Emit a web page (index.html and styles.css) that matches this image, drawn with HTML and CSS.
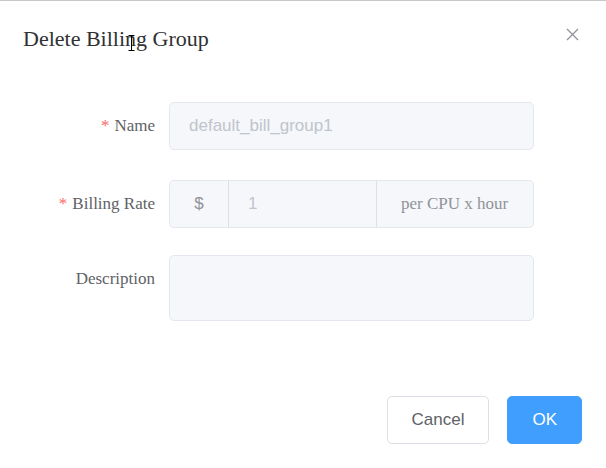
FILE: index.html
```html
<!DOCTYPE html>
<html>
<head>
<meta charset="utf-8">
<link rel="stylesheet" href="styles.css">
</head>
<body>
<div class="dialog">
  <div class="header">
    <span class="title">Delete Billing Group</span>
    <button class="close" aria-label="Close">
      <svg width="19" height="19" viewBox="0 0 19 19"><path d="M4 4 L15 15 M15 4 L4 15" stroke="#909399" stroke-width="1.3" fill="none"/></svg>
    </button>
  </div>
  <div class="body">
    <div class="row r1">
      <label class="label"><span class="req">*</span>Name</label>
      <div class="control">
        <div class="input">default_bill_group1</div>
      </div>
    </div>
    <div class="row r2">
      <label class="label"><span class="req">*</span>Billing Rate</label>
      <div class="control group">
        <div class="prepend">$</div>
        <div class="input mid">1</div>
        <div class="append">per CPU x hour</div>
      </div>
    </div>
    <div class="row r3">
      <label class="label">Description</label>
      <div class="control">
        <div class="textarea"></div>
      </div>
    </div>
  </div>
  <div class="footer">
    <button class="btn">Cancel</button>
    <button class="btn primary">OK</button>
  </div>
  <svg class="cursor" width="7" height="16" viewBox="0 0 7 16"><path d="M0.5 0.5 H6.5 M3.5 0.5 V15.5 M0.5 15.5 H6.5" stroke="#000" stroke-width="1" fill="none"/></svg>
</div>
</body>
</html>
```

FILE: styles.css
```css
html, body {
  margin: 0;
  padding: 0;
  background: #fff;
}
body {
  border-top: 1px solid #c9c9c9;
  width: 606px;
  height: 467px;
  overflow: hidden;
}
.dialog {
  position: relative;
  width: 606px;
  height: 467px;
  display: flex;
  flex-direction: column;
}
.header {
  display: flex;
  justify-content: space-between;
  align-items: flex-start;
  padding: 24px 24px 12px 23px;
}
.title {
  font-family: "Liberation Serif", serif;
  font-size: 22px;
  line-height: 28.8px;
  color: #303133;
}
.close {
  border: 0;
  background: none;
  padding: 0;
  margin: 0;
  width: 19px;
  height: 19px;
  display: block;
}
.close svg { display: block; }
.body {
  padding: 36px 24px 36px 24px;
}
.row {
  display: flex;
  align-items: flex-start;
}
.r1 { margin-bottom: 30px; }
.r2 { margin-bottom: 27px; }
.r3 { margin-bottom: 27px; }
.label {
  width: 145px;
  box-sizing: border-box;
  padding-right: 14px;
  text-align: right;
  font-family: "Liberation Serif", serif;
  font-size: 17px;
  line-height: 48px;
  color: #606266;
}
.req {
  color: #f56c6c;
  margin-right: 5px;
}
.control {
  width: 365px;
}
.input {
  box-sizing: border-box;
  height: 48px;
  line-height: 46px;
  border: 1px solid #e4e7ed;
  background: #f5f7fa;
  border-radius: 5px;
  padding: 0 18px 0 19px;
  font-family: "Liberation Sans", sans-serif;
  font-size: 17px;
  color: #c0c4cc;
}
.group {
  display: flex;
  height: 48px;
}
.prepend, .append {
  box-sizing: border-box;
  height: 48px;
  line-height: 46px;
  background: #f5f7fa;
  border: 1px solid #e4e7ed;
  color: #909399;
  padding: 0 24px;
  font-size: 17px;
}
.prepend {
  font-family: "Liberation Sans", sans-serif;
  border-radius: 5px 0 0 5px;
  border-right: 1px solid #dcdfe6;
  width: 60px;
  padding: 0;
  text-align: center;
}
.input.mid {
  flex: 1;
  border-radius: 0;
  border-left: 0;
  border-right: 0;
}
.append {
  font-family: "Liberation Serif", serif;
  border-radius: 0 5px 5px 0;
  border-left: 1px solid #dcdfe6;
  width: 158px;
}
.textarea {
  box-sizing: border-box;
  height: 66px;
  border: 1px solid #e4e7ed;
  background: #f5f7fa;
  border-radius: 5px;
}
.footer {
  display: flex;
  justify-content: flex-end;
  gap: 18px;
  padding: 12px 24px 24px;
}
.btn {
  box-sizing: border-box;
  height: 48px;
  padding: 0 24px;
  border: 1px solid #dcdfe6;
  border-radius: 5px;
  background: #fff;
  color: #606266;
  font-family: "Liberation Sans", sans-serif;
  font-size: 17px;
  margin: 0;
}
.btn.primary {
  background: #409eff;
  border-color: #409eff;
  color: #fff;
}
.cursor {
  position: absolute;
  left: 128px;
  top: 34px;
}
```
